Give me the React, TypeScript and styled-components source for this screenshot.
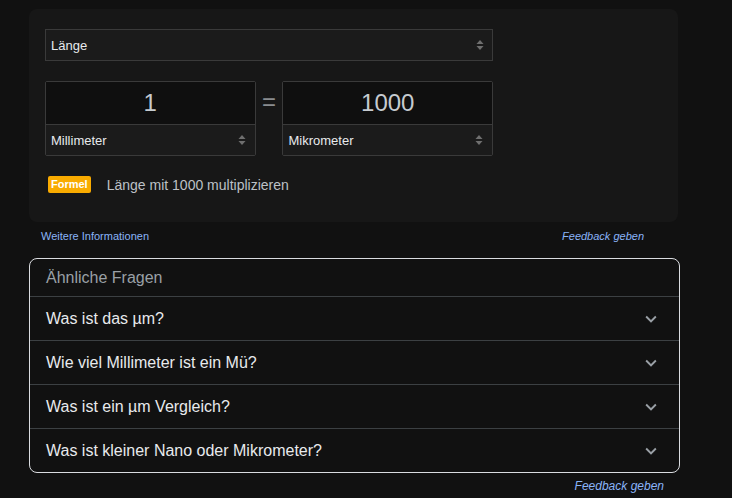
import styled, { createGlobalStyle } from "styled-components";

const GlobalStyle = createGlobalStyle`
  body {
    margin: 0;
    background-color: #111111;
    font-family: "Liberation Sans", Arial, sans-serif;
  }
`;

const questions = [
  "Was ist das µm?",
  "Wie viel Millimeter ist ein Mü?",
  "Was ist ein µm Vergleich?",
  "Was ist kleiner Nano oder Mikrometer?",
];

function UpDown() {
  return (
    <Arrows viewBox="0 0 8 12" width="8" height="12">
      <path d="M4 1 L7.5 5 H0.5 Z" fill="#6f6f6f" />
      <path d="M4 11 L7.5 7 H0.5 Z" fill="#6f6f6f" />
    </Arrows>
  );
}

function Chevron() {
  return (
    <svg viewBox="0 0 24 24" width="22" height="22">
      <path
        d="M16.59 8.59L12 13.17 7.41 8.59 6 10l6 6 6-6z"
        fill="#9aa0a6"
      />
    </svg>
  );
}

function App() {
  return (
    <Page>
      <GlobalStyle />
      <Card>
        <Select>
          <span>Länge</span>
          <UpDown />
        </Select>
        <Converter>
          <UnitBox>
            <ValueField>1</ValueField>
            <UnitSelect>
              <span>Millimeter</span>
              <UpDown />
            </UnitSelect>
          </UnitBox>
          <Equals>=</Equals>
          <UnitBox>
            <ValueField>1000</ValueField>
            <UnitSelect>
              <span>Mikrometer</span>
              <UpDown />
            </UnitSelect>
          </UnitBox>
        </Converter>
        <FormulaRow>
          <Badge>Formel</Badge>
          <FormulaText>Länge mit 1000 multiplizieren</FormulaText>
        </FormulaRow>
      </Card>
      <LinkRow>
        <Link>Weitere Informationen</Link>
        <Feedback>Feedback geben</Feedback>
      </LinkRow>
      <Questions>
        <QuestionsHeader>Ähnliche Fragen</QuestionsHeader>
        {questions.map((q) => (
          <QuestionRow key={q}>
            <span>{q}</span>
            <Chevron />
          </QuestionRow>
        ))}
      </Questions>
      <BottomFeedback>
        <Feedback $size={12}>Feedback geben</Feedback>
      </BottomFeedback>
    </Page>
  );
}

export default App;

const Page = styled.div`
  width: 651px;
  padding: 9px 0 0 29px;
`;

const Card = styled.div`
  width: 649px;
  height: 213px;
  box-sizing: border-box;
  background-color: #171717;
  border-radius: 8px;
  padding: 20px 16px 0;
`;

const Select = styled.div`
  width: 448px;
  height: 32px;
  box-sizing: border-box;
  border: 1px solid #3a3a3a;
  background-color: #1b1b1b;
  display: flex;
  align-items: center;
  justify-content: space-between;
  padding: 0 8px 0 5px;
  color: #e8eaed;
  font-size: 13px;
`;

const Arrows = styled.svg`
  display: block;
`;

const Converter = styled.div`
  display: flex;
  align-items: flex-start;
  margin-top: 20px;
  width: 448px;
`;

const UnitBox = styled.div`
  width: 211px;
  height: 75px;
  box-sizing: border-box;
  border: 1px solid #3a3a3a;
  border-radius: 2px;
  display: flex;
  flex-direction: column;
`;

const ValueField = styled.div`
  height: 42px;
  background-color: #0f0f0f;
  border-bottom: 1px solid #3a3a3a;
  display: flex;
  align-items: center;
  justify-content: center;
  color: #c6cbd0;
  font-size: 24px;
`;

const UnitSelect = styled.div`
  flex: 1;
  background-color: #1b1b1b;
  display: flex;
  align-items: center;
  justify-content: space-between;
  padding: 0 9px 0 5px;
  color: #e8eaed;
  font-size: 13px;
`;

const Equals = styled.div`
  width: 27px;
  height: 42px;
  display: flex;
  align-items: center;
  justify-content: center;
  color: #8a8d90;
  font-size: 24px;
`;

const FormulaRow = styled.div`
  display: flex;
  align-items: center;
  margin-top: 20px;
  padding-left: 3px;
`;

const Badge = styled.span`
  background-color: #f9ab00;
  color: #ffffff;
  font-size: 11px;
  font-weight: 700;
  line-height: 17px;
  padding: 0 3px;
  border-radius: 2px;
`;

const FormulaText = styled.span`
  margin-left: 16px;
  color: #bdc1c6;
  font-size: 14px;
`;

const LinkRow = styled.div`
  width: 649px;
  box-sizing: border-box;
  display: flex;
  justify-content: space-between;
  align-items: center;
  padding: 0 34px 0 12px;
  height: 28px;
`;

const Link = styled.span`
  color: #8ab4f8;
  font-size: 11px;
`;

const Feedback = styled.span<{ $size?: number }>`
  color: #8ab4f8;
  font-size: ${(p) => p.$size ?? 11}px;
  font-style: italic;
`;

const Questions = styled.div`
  margin-top: 8px;
  width: 651px;
  box-sizing: border-box;
  border: 1px solid #dadce0;
  border-radius: 8px;
`;

const QuestionsHeader = styled.div`
  height: 37px;
  display: flex;
  align-items: center;
  padding-left: 16px;
  color: #9aa0a6;
  font-size: 16px;
`;

const QuestionRow = styled.div`
  height: 43px;
  border-top: 1px solid #3c4043;
  display: flex;
  align-items: center;
  justify-content: space-between;
  padding: 0 17px 0 16px;
  color: #e8eaed;
  font-size: 16px;
`;

const BottomFeedback = styled.div`
  display: flex;
  justify-content: flex-end;
  padding: 6px 16px 0 0;
`;
